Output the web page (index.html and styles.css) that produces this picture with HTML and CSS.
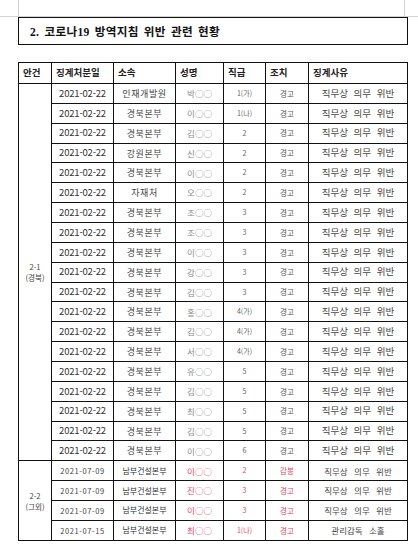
FILE: index.html
```html
<!DOCTYPE html>
<html lang="ko">
<head>
<meta charset="utf-8">
<title>코로나19 방역지침 위반 관련 현황</title>
<link rel="stylesheet" href="styles.css">
</head>
<body>
<div class="marks"><div class="marks-inner"></div></div>
<div class="title-box"><h2 class="title">2. 코로나19 방역지침 위반 관련 현황</h2></div>
<table class="grid">
  <colgroup>
    <col class="c1"><col class="c2"><col class="c3"><col class="c4"><col class="c5"><col class="c6"><col class="c7">
  </colgroup>
  <thead>
    <tr class="head"><th>안건</th><th>징계처분일</th><th>소속</th><th>성명</th><th>직급</th><th>조치</th><th>징계사유</th></tr>
  </thead>
  <tbody>
    <tr><td class="case" rowspan="19"><span class="case-line">2-1</span><span class="case-line">(경북)</span></td><td class="date">2021-02-22</td><td class="org">인재개발원</td><td class="name">박○○</td><td class="rank">1(가)</td><td class="act">경고</td><td class="reason">직무상 의무 위반</td></tr>
    <tr><td class="date">2021-02-22</td><td class="org">경북본부</td><td class="name">이○○</td><td class="rank">1(나)</td><td class="act">경고</td><td class="reason">직무상 의무 위반</td></tr>
    <tr><td class="date">2021-02-22</td><td class="org">경북본부</td><td class="name">김○○</td><td class="rank">2</td><td class="act">경고</td><td class="reason">직무상 의무 위반</td></tr>
    <tr><td class="date">2021-02-22</td><td class="org">강원본부</td><td class="name">신○○</td><td class="rank">2</td><td class="act">경고</td><td class="reason">직무상 의무 위반</td></tr>
    <tr><td class="date">2021-02-22</td><td class="org">경북본부</td><td class="name">이○○</td><td class="rank">2</td><td class="act">경고</td><td class="reason">직무상 의무 위반</td></tr>
    <tr><td class="date">2021-02-22</td><td class="org">자재처</td><td class="name">오○○</td><td class="rank">2</td><td class="act">경고</td><td class="reason">직무상 의무 위반</td></tr>
    <tr><td class="date">2021-02-22</td><td class="org">경북본부</td><td class="name">조○○</td><td class="rank">3</td><td class="act">경고</td><td class="reason">직무상 의무 위반</td></tr>
    <tr><td class="date">2021-02-22</td><td class="org">경북본부</td><td class="name">조○○</td><td class="rank">3</td><td class="act">경고</td><td class="reason">직무상 의무 위반</td></tr>
    <tr><td class="date">2021-02-22</td><td class="org">경북본부</td><td class="name">이○○</td><td class="rank">3</td><td class="act">경고</td><td class="reason">직무상 의무 위반</td></tr>
    <tr><td class="date">2021-02-22</td><td class="org">경북본부</td><td class="name">강○○</td><td class="rank">3</td><td class="act">경고</td><td class="reason">직무상 의무 위반</td></tr>
    <tr><td class="date">2021-02-22</td><td class="org">경북본부</td><td class="name">김○○</td><td class="rank">3</td><td class="act">경고</td><td class="reason">직무상 의무 위반</td></tr>
    <tr><td class="date">2021-02-22</td><td class="org">경북본부</td><td class="name">홍○○</td><td class="rank">4(가)</td><td class="act">경고</td><td class="reason">직무상 의무 위반</td></tr>
    <tr><td class="date">2021-02-22</td><td class="org">경북본부</td><td class="name">김○○</td><td class="rank">4(가)</td><td class="act">경고</td><td class="reason">직무상 의무 위반</td></tr>
    <tr><td class="date">2021-02-22</td><td class="org">경북본부</td><td class="name">서○○</td><td class="rank">4(가)</td><td class="act">경고</td><td class="reason">직무상 의무 위반</td></tr>
    <tr><td class="date">2021-02-22</td><td class="org">경북본부</td><td class="name">유○○</td><td class="rank">5</td><td class="act">경고</td><td class="reason">직무상 의무 위반</td></tr>
    <tr><td class="date">2021-02-22</td><td class="org">경북본부</td><td class="name">김○○</td><td class="rank">5</td><td class="act">경고</td><td class="reason">직무상 의무 위반</td></tr>
    <tr><td class="date">2021-02-22</td><td class="org">경북본부</td><td class="name">최○○</td><td class="rank">5</td><td class="act">경고</td><td class="reason">직무상 의무 위반</td></tr>
    <tr><td class="date">2021-02-22</td><td class="org">경북본부</td><td class="name">김○○</td><td class="rank">5</td><td class="act">경고</td><td class="reason">직무상 의무 위반</td></tr>
    <tr><td class="date">2021-02-22</td><td class="org">경북본부</td><td class="name">이○○</td><td class="rank">6</td><td class="act">경고</td><td class="reason">직무상 의무 위반</td></tr>
    <tr class="alt"><td class="case" rowspan="4"><span class="case-line">2-2</span><span class="case-line">(그외)</span></td><td class="date">2021-07-09</td><td class="org">남부건설본부</td><td class="name red">이○○</td><td class="rank red">2</td><td class="act red">감봉</td><td class="reason">직무상 의무 위반</td></tr>
    <tr class="alt"><td class="date">2021-07-09</td><td class="org">남부건설본부</td><td class="name red">진○○</td><td class="rank red">3</td><td class="act red">경고</td><td class="reason">직무상 의무 위반</td></tr>
    <tr class="alt"><td class="date">2021-07-09</td><td class="org">남부건설본부</td><td class="name red">이○○</td><td class="rank red">3</td><td class="act red">경고</td><td class="reason">직무상 의무 위반</td></tr>
    <tr class="alt"><td class="date">2021-07-15</td><td class="org">남부건설본부</td><td class="name red">최○○</td><td class="rank red">1(나)</td><td class="act red">경고</td><td class="reason">관리감독 소홀</td></tr>
  </tbody>
</table>
</body>
</html>
```

FILE: styles.css
```css
html, body {
  margin: 0;
  padding: 0;
  background: #fff;
}

body {
  font-family: "Noto Sans CJK KR", "Noto Sans", sans-serif;
  color: #333;
}

.marks {
  height: 16px;
  border-bottom: 1px solid #d4d4d4;
}

.marks-inner {
  margin-left: 18px;
  width: 385px;
  height: 100%;
  border-left: 1px solid #d4d4d4;
  border-right: 1px solid #d4d4d4;
}

.title-box {
  box-sizing: border-box;
  margin-left: 18px;
  width: 390px;
  height: 28px;
  border: 1px solid #111;
  display: flex;
  align-items: center;
  padding-left: 11px;
}

.title {
  margin: 0;
  font-family: "Liberation Serif", "Noto Sans CJK KR", serif;
  font-size: 11.6px;
  font-weight: bold;
  color: #111;
  word-spacing: 2px;
  letter-spacing: 0.3px;
}

.grid {
  margin-top: 17px;
  margin-left: 18px;
  width: 390px;
  table-layout: fixed;
  border-collapse: separate;
  border-spacing: 0;
  border-top: 1px solid #111;
  border-left: 1px solid #111;
}

.c1 { width: 33px; }
.c2 { width: 62px; }
.c3 { width: 62px; }
.c4 { width: 48px; }
.c5 { width: 42px; }
.c6 { width: 43px; }
.c7 { width: 99px; }

.grid th,
.grid td {
  border-right: 1px solid #111;
  border-bottom: 1px solid #111;
  padding: 0;
  vertical-align: middle;
  text-align: center;
  white-space: nowrap;
  overflow: hidden;
  line-height: 1;
}

.grid th {
  height: 21px;
  box-sizing: border-box;
  text-align: left;
  padding-left: 4px;
  font-size: 9.5px;
  font-weight: bold;
  color: #222;
}

.grid tbody tr {
  height: 19.87px;
}

.case {
  font-size: 7.6px;
  color: #444;
}

.case-line {
  display: block;
  line-height: 11px;
}

.date {
  font-size: 9.5px;
  color: #333;
  letter-spacing: -0.2px;
}

.org {
  font-size: 9px;
  letter-spacing: 0.6px;
  color: #444;
}

.name {
  font-size: 8.5px;
  color: #8a8a8a;
}

.rank {
  font-size: 7px;
  color: #666;
}

.act {
  font-size: 7.5px;
  color: #555;
}

.reason {
  font-size: 9.5px;
  word-spacing: 3px;
  color: #444;
}

.alt .date {
  font-size: 7.5px;
  letter-spacing: 0.6px;
  color: #444;
}

.alt .org {
  font-size: 8px;
  letter-spacing: 0;
  color: #333;
}

.alt .reason {
  font-size: 8.5px;
  word-spacing: 4px;
}

.red {
  color: #e2485a;
}
```
